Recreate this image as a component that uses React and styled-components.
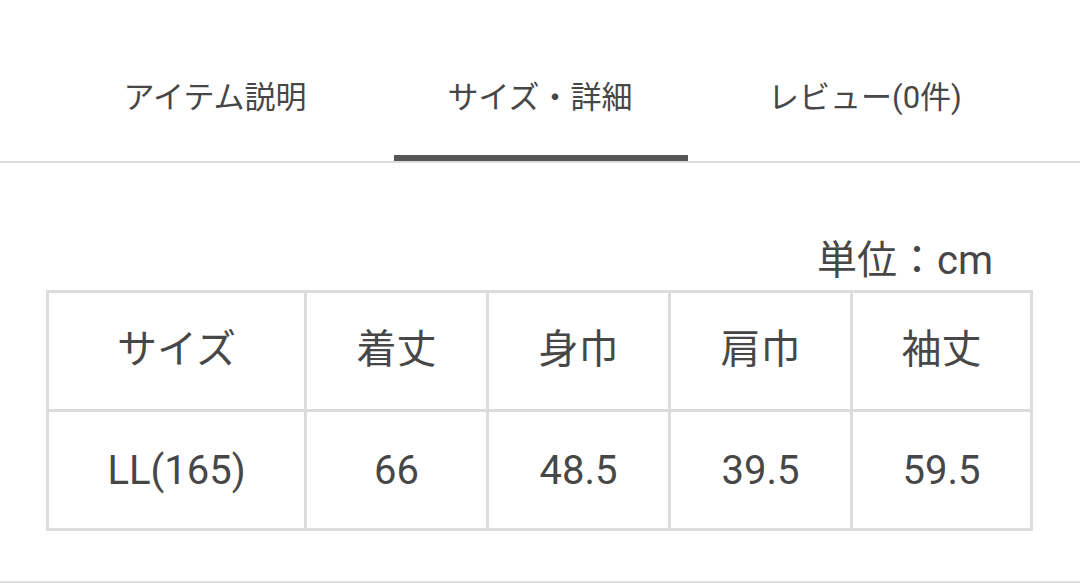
import React, { useState } from "react";
import styled, { createGlobalStyle } from "styled-components";

const GlobalStyle = createGlobalStyle`
  html, body {
    margin: 0;
    padding: 0;
    background: #fff;
  }
  body {
    font-family: Roboto, "Noto Sans CJK JP", "Noto Sans", sans-serif;
    color: #444;
  }
`;

const Page = styled.div`
  width: 1080px;
  height: 583px;
  display: flex;
  flex-direction: column;
  border-bottom: 2px solid #dedede;
  box-sizing: border-box;
`;

const TabBar = styled.div`
  display: flex;
  justify-content: center;
  border-bottom: 2px solid #dcdcdc;
`;

const Tab = styled.button`
  position: relative;
  width: 325px;
  padding: 77px 0 42px;
  border: none;
  background: none;
  font-family: inherit;
  font-size: 31px;
  font-weight: 400;
  line-height: 42px;
  color: #474747;
  cursor: pointer;

  &::after {
    content: "";
    display: ${(p) => (p.$active ? "block" : "none")};
    position: absolute;
    left: 16px;
    right: 15px;
    bottom: 0;
    height: 6px;
    background: #555;
  }
`;

const Content = styled.div`
  display: flex;
  flex-direction: column;
  padding: 0 47px 0 46px;
`;

const Unit = styled.div`
  margin-top: 74px;
  padding-right: 40px;
  text-align: right;
  font-size: 40px;
  line-height: 48px;
  color: #474747;
`;

const SizeTable = styled.table`
  margin-top: 5px;
  border-collapse: separate;
  border-spacing: 3px;
  background: #dcdcdc;
  table-layout: fixed;
  width: 987px;
`;

const Cell = styled.td`
  background: #fff;
  height: 116px;
  padding: 0 0 ${(p) => (p.$head ? "10px" : "0")};
  box-sizing: border-box;
  text-align: center;
  vertical-align: middle;
  font-size: 40px;
  font-weight: 400;
  color: #474747;
`;

const tabs = ["アイテム説明", "サイズ・詳細", "レビュー(0件)"];
const headers = ["サイズ", "着丈", "身巾", "肩巾", "袖丈"];
const values = ["LL(165)", "66", "48.5", "39.5", "59.5"];
const widths = [255, 179, 179, 179, 177];

export default function App() {
  const [active, setActive] = useState(1);

  return (
    <>
      <GlobalStyle />
      <Page>
        <TabBar>
          {tabs.map((t, i) => (
            <Tab key={t} $active={i === active} onClick={() => setActive(i)}>
              {t}
            </Tab>
          ))}
        </TabBar>
        <Content>
          <Unit>単位：cm</Unit>
          <SizeTable>
            <colgroup>
              {widths.map((w, i) => (
                <col key={i} style={{ width: w }} />
              ))}
            </colgroup>
            <tbody>
              <tr>
                {headers.map((h) => (
                  <Cell as="th" $head key={h}>
                    {h}
                  </Cell>
                ))}
              </tr>
              <tr>
                {values.map((v, i) => (
                  <Cell key={i}>{v}</Cell>
                ))}
              </tr>
            </tbody>
          </SizeTable>
        </Content>
      </Page>
    </>
  );
}
